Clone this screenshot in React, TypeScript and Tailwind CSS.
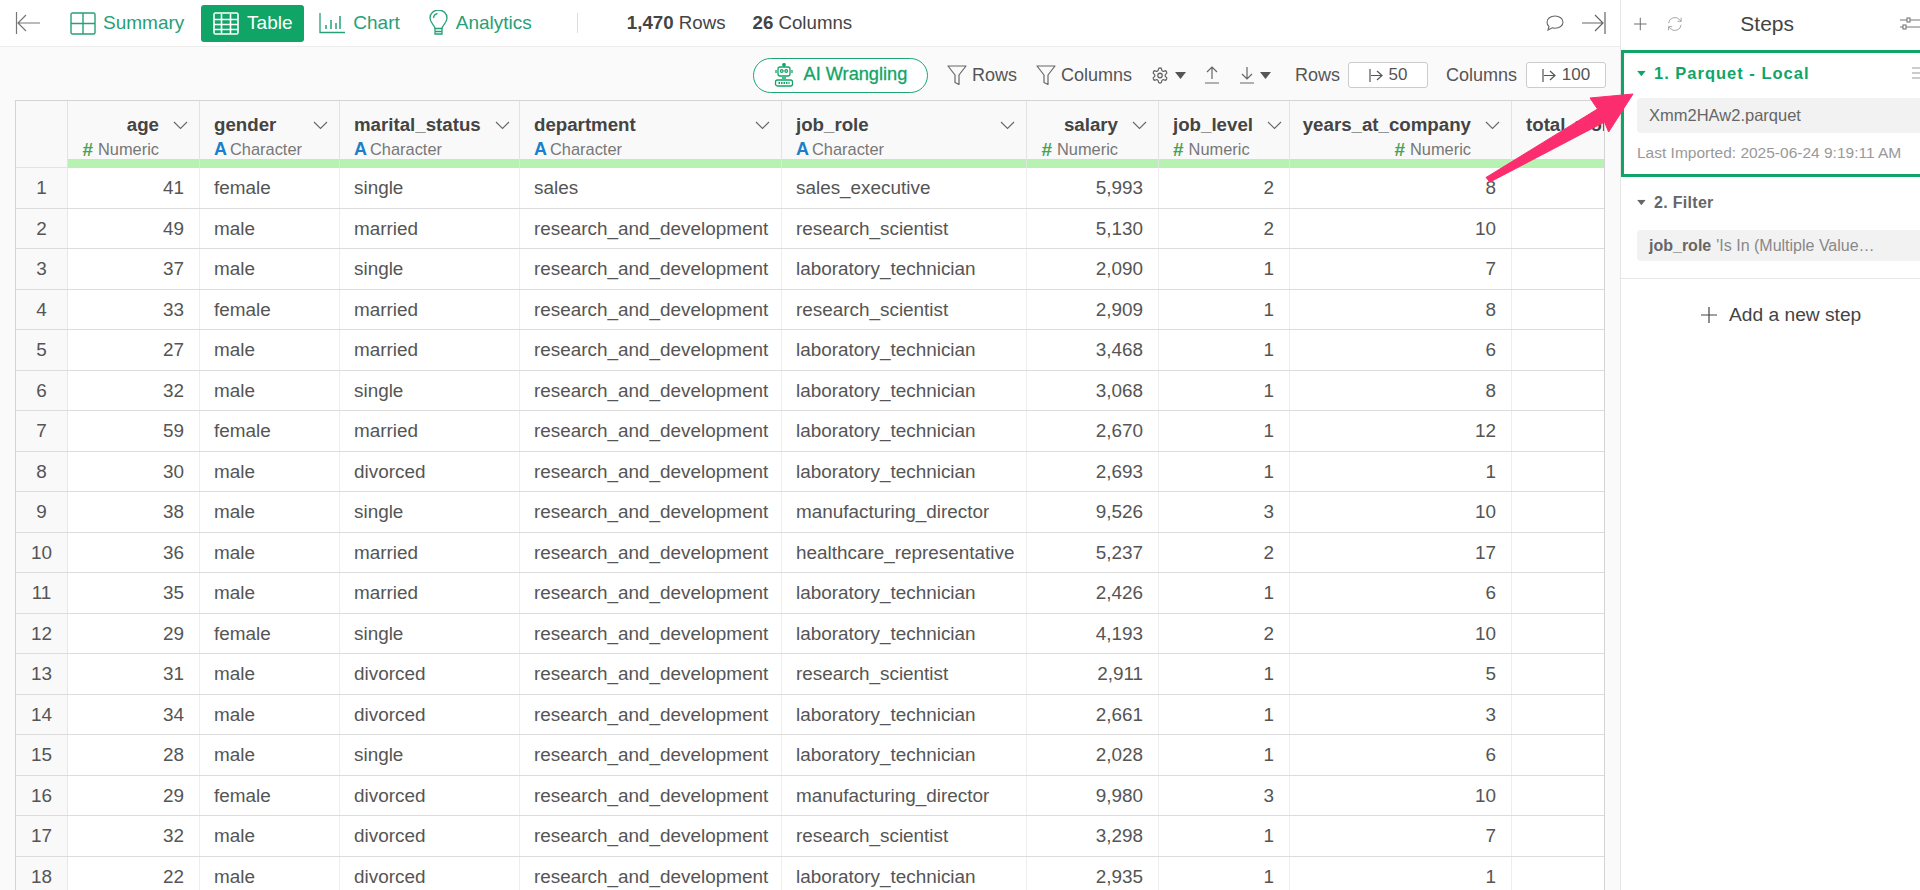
import * as React from "react";

// ---------------------------------------------------------------------------
// Data
// ---------------------------------------------------------------------------

const gridCols =
  "grid grid-cols-[52px_132px_140px_180px_262px_245px_132px_131px_222px_92px]";

const columns = [
  { name: "age", kind: "Numeric", right: true },
  { name: "gender", kind: "Character" },
  { name: "marital_status", kind: "Character" },
  { name: "department", kind: "Character" },
  { name: "job_role", kind: "Character" },
  { name: "salary", kind: "Numeric", right: true },
  { name: "job_level", kind: "Numeric" },
  { name: "years_at_company", kind: "Numeric", right: true },
];

const rd = "research_and_development";
const lt = "laboratory_technician";
const rs = "research_scientist";
const md = "manufacturing_director";

const rows = [
  ["41", "female", "single", "sales", "sales_executive", "5,993", "2", "8"],
  ["49", "male", "married", rd, rs, "5,130", "2", "10"],
  ["37", "male", "single", rd, lt, "2,090", "1", "7"],
  ["33", "female", "married", rd, rs, "2,909", "1", "8"],
  ["27", "male", "married", rd, lt, "3,468", "1", "6"],
  ["32", "male", "single", rd, lt, "3,068", "1", "8"],
  ["59", "female", "married", rd, lt, "2,670", "1", "12"],
  ["30", "male", "divorced", rd, lt, "2,693", "1", "1"],
  ["38", "male", "single", rd, md, "9,526", "3", "10"],
  ["36", "male", "married", rd, "healthcare_representative", "5,237", "2", "17"],
  ["35", "male", "married", rd, lt, "2,426", "1", "6"],
  ["29", "female", "single", rd, lt, "4,193", "2", "10"],
  ["31", "male", "divorced", rd, rs, "2,911", "1", "5"],
  ["34", "male", "divorced", rd, lt, "2,661", "1", "3"],
  ["28", "male", "single", rd, lt, "2,028", "1", "6"],
  ["29", "female", "divorced", rd, md, "9,980", "3", "10"],
  ["32", "male", "divorced", rd, rs, "3,298", "1", "7"],
  ["22", "male", "divorced", rd, lt, "2,935", "1", "1"],
];

const rightCols = [0, 5, 6, 7];

// ---------------------------------------------------------------------------
// Icons
// ---------------------------------------------------------------------------

function Line({ w, h, d, cls }: { w: number; h: number; d: string; cls: string }) {
  return (
    <svg width={w} height={h} viewBox={`0 0 ${w} ${h}`} fill="none" stroke="currentColor" strokeWidth="1.2" className={cls}>
      <path d={d} />
    </svg>
  );
}

function SummaryIcon() {
  return (
    <svg width="26" height="23" viewBox="0 0 26 23" fill="none" stroke="currentColor" strokeWidth="1.4">
      <rect x="1" y="1" width="24" height="21" rx="1.5" />
      <path d="M13 1v21M1 11.5h24" />
    </svg>
  );
}

function TableIcon() {
  return (
    <svg width="26" height="23" viewBox="0 0 26 23" fill="none" stroke="white" strokeWidth="1.6">
      <rect x="1" y="1" width="24" height="21" rx="1.5" />
      <path d="M1 7.5h24M1 12.5h24M1 17.5h24M8.5 2v20M17.5 2v20" />
    </svg>
  );
}

function ChartIcon() {
  return (
    <svg width="26" height="22" viewBox="0 0 26 22" fill="none" stroke="currentColor" strokeWidth="1.3">
      <path d="M1 1v19.5h25" />
      <path d="M7 13v4M12 8v9M17 11v6M21 4v13" strokeWidth="1.5" />
    </svg>
  );
}

function BulbIcon() {
  return (
    <svg width="19" height="26" viewBox="0 0 19 26" fill="none" stroke="currentColor" strokeWidth="1.3">
      <path d="M6 18.5c0-3-5-5.5-5-10.5a8.5 8 0 0 1 17 0c0 5-5 7.5-5 10.5z" />
      <path d="M6 18.5v5.5h7v-5.5M6 21.5h7M4.5 8a5 5 0 0 1 4-4.5" />
    </svg>
  );
}

function RobotIcon() {
  return (
    <svg width="20" height="24" viewBox="0 0 20 24" fill="none" stroke="#10a567" strokeWidth="1.3">
      <circle cx="10" cy="1.8" r="1.2" fill="#10a567" />
      <rect x="4" y="4" width="12" height="9" rx="2" />
      <circle cx="7.8" cy="8" r="1.3" />
      <circle cx="12.2" cy="8" r="1.3" />
      <path d="M2 7v3M18 7v3M8 15h4" />
      <rect x="1.5" y="17" width="17" height="6" rx="2" />
      <path d="M4.5 20h11" strokeDasharray="1.5 1" strokeWidth="2" />
    </svg>
  );
}

function FunnelIcon() {
  return (
    <svg width="20" height="21" viewBox="0 0 20 21" fill="none" stroke="#666" strokeWidth="1.2">
      <path d="M1 1h18l-7 9v9.5l-4-2V10z" strokeLinejoin="round" />
    </svg>
  );
}

function GearIcon() {
  return (
    <svg width="18" height="19" viewBox="0 0 24 24" fill="none" stroke="#666" strokeWidth="1.7" strokeLinecap="round" strokeLinejoin="round">
      <path d="M12.22 2h-.44a2 2 0 0 0-2 2v.18a2 2 0 0 1-1 1.73l-.43.25a2 2 0 0 1-2 0l-.15-.08a2 2 0 0 0-2.73.73l-.22.38a2 2 0 0 0 .73 2.73l.15.1a2 2 0 0 1 1 1.72v.51a2 2 0 0 1-1 1.74l-.15.09a2 2 0 0 0-.73 2.73l.22.38a2 2 0 0 0 2.73.73l.15-.08a2 2 0 0 1 2 0l.43.25a2 2 0 0 1 1 1.73V20a2 2 0 0 0 2 2h.44a2 2 0 0 0 2-2v-.18a2 2 0 0 1 1-1.73l.43-.25a2 2 0 0 1 2 0l.15.08a2 2 0 0 0 2.73-.73l.22-.39a2 2 0 0 0-.73-2.73l-.15-.08a2 2 0 0 1-1-1.74v-.5a2 2 0 0 1 1-1.74l.15-.09a2 2 0 0 0 .73-2.73l-.22-.38a2 2 0 0 0-2.73-.73l-.15.08a2 2 0 0 1-2 0l-.43-.25a2 2 0 0 1-1-1.73V4a2 2 0 0 0-2-2z" />
      <circle cx="12" cy="12" r="3" />
    </svg>
  );
}

function Caret({ cls }: { cls: string }) {
  return (
    <svg width="11" height="7" viewBox="0 0 11 7" className={cls}>
      <path d="M0 0h11L5.5 7z" fill="currentColor" />
    </svg>
  );
}

function Chevron() {
  return (
    <svg width="15" height="9" viewBox="0 0 15 9" fill="none" stroke="#666" strokeWidth="1.1" className="shrink-0">
      <path d="M1 1l6.5 6.5L14 1" />
    </svg>
  );
}

function Hash() {
  return <span className="font-bold text-[#45a54f] text-[19px] leading-none mr-[5px]">#</span>;
}

function LetterA() {
  return <span className="font-bold text-[#1b7fc9] text-[18px] leading-none mr-[3px]">A</span>;
}

// ---------------------------------------------------------------------------
// Table
// ---------------------------------------------------------------------------

function HeaderCell({ name, kind, right }: { name: string; kind: string; right?: boolean }) {
  return (
    <div className="h-[67px] border-r border-[#e3e3e3] bg-[#f9f9f9] flex flex-col">
      <div className="h-[58px] pl-[14px] pr-[11px] pt-[12px]">
        <div className={`flex items-center gap-[14px] ${right ? "justify-end" : "justify-between"}`}>
          <span className="text-[18.7px] leading-[24px] font-bold text-[#444]">{name}</span>
          <Chevron />
        </div>
        <div className={`flex items-center h-[22px] mt-[1px] text-[16.4px] text-[#777] ${right ? "justify-end pr-[29px]" : ""}`}>
          {kind === "Numeric" ? <Hash /> : <LetterA />}
          {kind}
        </div>
      </div>
      <div className="h-[9px] bg-[#b8f2b2]" />
    </div>
  );
}

function DataTable() {
  return (
    <div className="ml-[15px] w-[1590px] border-x border-t border-[#d4d4d4] bg-white">
      <div className={gridCols}>
        <div className="h-[67px] bg-[#f9f9f9] border-r border-b border-[#e3e3e3]" />
        {columns.map((c) => (
          <HeaderCell key={c.name} {...c} />
        ))}
        <div className="h-[67px] bg-[#f9f9f9] flex flex-col overflow-hidden">
          <div className="h-[58px] pl-[14px] pt-[12px] text-[18.7px] leading-[24px] font-bold text-[#444] whitespace-nowrap">
            total_working_years
          </div>
          <div className="h-[9px] bg-[#b8f2b2]" />
        </div>
      </div>
      {rows.map((row, i) => (
        <div key={i} className={`${gridCols} h-[40.5px] border-b border-[#dcdcdc] text-[18.9px] text-[#555]`}>
          <div className="bg-[#f9f9f9] border-r border-[#e8e8e8] flex items-center justify-center pt-[1px]">{i + 1}</div>
          {row.map((v, j) => (
            <div
              key={j}
              className={`border-r border-[#eeeeee] flex items-center whitespace-nowrap overflow-hidden pt-[1px] ${
                rightCols.includes(j) ? "justify-end pr-[15px]" : "pl-[14px]"
              }`}
            >
              {v}
            </div>
          ))}
          <div />
        </div>
      ))}
    </div>
  );
}

// ---------------------------------------------------------------------------
// Bars
// ---------------------------------------------------------------------------

function TopBar() {
  return (
    <div className="h-[47px] border-b border-[#ececec] bg-white flex items-center text-[19px] text-[#27a078]">
      <Line w={26} h={22} cls="ml-[15px] text-[#777]" d="M1.5 0v22M25 11H3M11 3l-8 8 8 8" />
      <div className="ml-[29px] flex items-center gap-[7px]">
        <SummaryIcon />
        <span>Summary</span>
      </div>
      <div className="ml-[17px] w-[103px] h-[37px] rounded-[3px] bg-[#10a567] text-white flex items-center justify-center gap-[8px]">
        <TableIcon />
        <span>Table</span>
      </div>
      <div className="ml-[15px] flex items-center gap-[8px]">
        <ChartIcon />
        <span>Chart</span>
      </div>
      <div className="ml-[29px] flex items-center gap-[8px]">
        <BulbIcon />
        <span>Analytics</span>
      </div>
      <div className="ml-[45px] h-[20px] w-px bg-[#dddddd]" />
      <div className="ml-[49px] text-[#444] text-[18.7px]">
        <b>1,470</b> Rows
      </div>
      <div className="ml-[27px] text-[#444] text-[18.7px]">
        <b>26</b> Columns
      </div>
      <div className="ml-auto flex items-center gap-[18px] pr-[14px] text-[#666]">
        <svg width="18" height="16" viewBox="0 0 18 16" fill="none" stroke="currentColor" strokeWidth="1.1">
          <path d="M9 1c4.5 0 8 2.7 8 6.2s-3.5 6-8 6c-1 0-2-.1-2.8-.4L2 15l1-3.5C1.7 10.5 1 9 1 7.2 1 3.700 4.5 1 9 1z" />
        </svg>
        <Line w={24} h={22} cls="" d="M23 0v22M0 11h21M13 3l8 8-8 8" />
      </div>
    </div>
  );
}

function ToolBar() {
  return (
    <div className="h-[53px] pt-[3px] flex items-center justify-end pr-[14px] text-[18px] text-[#555]">
      <div className="w-[175px] h-[35px] rounded-full border-[1.5px] border-[#1aa772] bg-white flex items-center justify-center gap-[10px] text-[18.2px] text-[#10a567] [-webkit-text-stroke:0.3px_#10a567]">
        <RobotIcon />
        <span>AI Wrangling</span>
      </div>
      <div className="ml-[19px] flex items-center gap-[5px]">
        <FunnelIcon />
        <span>Rows</span>
      </div>
      <div className="ml-[19px] flex items-center gap-[5px]">
        <FunnelIcon />
        <span>Columns</span>
      </div>
      <div className="ml-[19px] flex items-center gap-[6px]">
        <GearIcon />
        <Caret cls="text-[#555]" />
      </div>
      <Line w={14} h={18} cls="ml-[19px] text-[#666]" d="M7 13V1M2 6l5-5 5 5M0 17h14" />
      <div className="ml-[21px] flex items-center gap-[6px]">
        <Line w={14} h={18} cls="text-[#666]" d="M7 1v12M2 8l5 5 5-5M0 17h14" />
        <Caret cls="text-[#555]" />
      </div>
      <span className="ml-[24px]">Rows</span>
      <PageBox value="50" cls="ml-[8px]" />
      <span className="ml-[18px]">Columns</span>
      <PageBox value="100" cls="ml-[9px]" />
    </div>
  );
}

function PageBox({ value, cls }: { value: string; cls: string }) {
  return (
    <div className={`${cls} w-[80px] h-[26px] bg-white border border-[#cccccc] rounded-[3px] flex items-center justify-center gap-[6px] text-[17px] text-[#555]`}>
      <Line w={14} h={13} cls="" d="M1 0v13M2 6.5h11M8 2l5 4.500L8 11" />
      {value}
    </div>
  );
}

function StepsPanel() {
  return (
    <div className="w-[300px] shrink-0 h-full bg-white border-l border-[#e6e6e6] overflow-hidden">
      <div className="h-[50px] pb-[3px] flex items-center text-[#666]">
        <Line w={16} h={16} cls="ml-[13px]" d="M8 0v16M0 8h16" />
        <svg width="20" height="20" viewBox="0 0 20 20" fill="none" stroke="#999" strokeWidth="1.1" className="ml-[20px]">
          <path d="M2 9a8 8 0 0 1 14-4.5l2 2M18 2v4.600h-4.600M18 11a8 8 0 0 1-14 4.500l-2-2M2 18v-4.600h4.600" />
        </svg>
        <span className="ml-[58px] text-[21px] text-[#444]">Steps</span>
        <svg width="20" height="16" viewBox="0 0 20 16" fill="none" stroke="#777" strokeWidth="1.1" className="ml-[106px] shrink-0">
          <path d="M0 4h20M0 11h20" />
          <rect x="7" y="2" width="3" height="4" fill="white" />
          <rect x="3" y="9" width="3" height="4" fill="white" />
        </svg>
      </div>
      <div className="h-[127px] w-[320px] border-[3px] border-[#10a567] pl-[13px]">
        <div className="h-[40px] pr-[12px] flex items-center gap-[6px] text-[16.5px] font-bold tracking-[1px] text-[#10a567]">
          <Caret cls="text-[#10a567] scale-[.8] origin-left" />
          <span>1. Parquet - Local</span>
          <svg width="14" height="14" viewBox="0 0 14 14" stroke="#999" className="ml-auto">
            <path d="M0 2h14M0 7h14M0 12h14" />
          </svg>
        </div>
        <div className="h-[35px] mt-[5px] rounded-[4px] bg-[#f2f2f2] pl-[12px] flex items-center text-[16.5px] text-[#666]">
          Xmm2HAw2.parquet
        </div>
        <div className="mt-[10px] text-[15.5px] leading-[20px] text-[#999] whitespace-nowrap">
          Last Imported: 2025-06-24 9:19:11 AM
        </div>
      </div>
      <div className="h-[102px] border-b border-[#e6e6e6] pl-[16px]">
        <div className="pt-[14px] h-[53px] flex items-start gap-[6px] text-[16px] font-bold tracking-[0.3px] text-[#666]">
          <Caret cls="text-[#666] scale-[.8] origin-left mt-[8px]" />
          <span>2. Filter</span>
        </div>
        <div className="w-[300px] h-[31px] rounded-[4px] bg-[#f2f2f2] pl-[12px] flex items-center text-[16px] text-[#888] whitespace-nowrap">
          <b className="text-[#666]">job_role</b>
          <span className="ml-[5px]">'Is In (Multiple Value…</span>
        </div>
      </div>
      <div className="mt-[22px] ml-[80px] flex items-center gap-[12px] text-[19.2px] text-[#444]">
        <Line w={16} h={16} cls="" d="M8 0v16M0 8h16" />
        <span>Add a new step</span>
      </div>
    </div>
  );
}

export default function App() {
  return (
    <div className="relative h-[890px] w-[1920px] overflow-hidden flex bg-[#fafafa] font-['Liberation_Sans',Arial,sans-serif]">
      <div className="flex-1 min-w-0">
        <TopBar />
        <ToolBar />
        <DataTable />
      </div>
      <StepsPanel />
      {/* callout arrow drawn over the screenshot */}
      <svg width="1920" height="890" className="absolute left-0 top-0 pointer-events-none">
        <path
          d="M1486 177.5L1490 182L1604.5 122L1608.6 132L1633 94L1590 98L1597.5 109z"
          fill="#fb2d6e"
          stroke="#fb2d6e"
          strokeLinejoin="round"
          strokeWidth="1"
        />
      </svg>
    </div>
  );
}
